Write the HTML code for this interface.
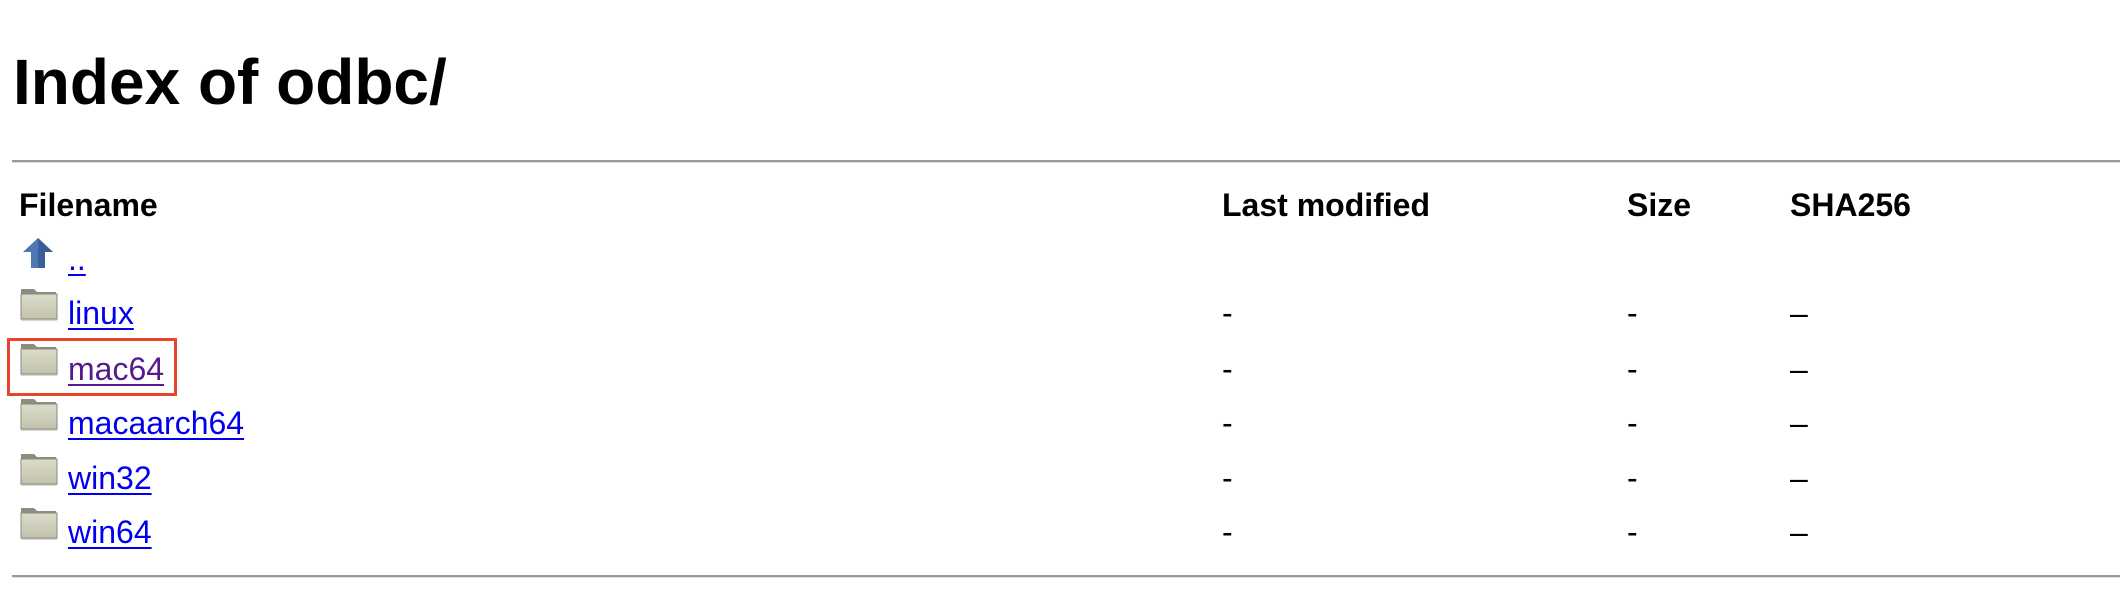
<!DOCTYPE html>
<html><head><meta charset="utf-8"><style>
html,body{margin:0;padding:0;background:#fff;width:2120px;height:614px;overflow:hidden;font-family:"Liberation Sans",Arial,sans-serif;}
.a{position:absolute;white-space:nowrap;}
h1{position:absolute;left:13px;top:50px;margin:0;font-size:64px;line-height:64px;font-weight:bold;}
.hr{position:absolute;left:12px;width:2108px;height:2px;background:#9a9a9a;border-bottom:1px solid #e0e0e0;}
.th{font-size:32px;line-height:32px;font-weight:bold;}
.t{font-size:32px;line-height:32px;}
a{color:#0000ee;text-decoration:underline;text-decoration-thickness:2px;text-underline-offset:4px;}
a.v{color:#551a8b;}
.box{position:absolute;left:7px;top:338px;width:164px;height:52px;border:3px solid #e8452c;}
</style></head><body>
<h1>Index of odbc/</h1>
<div class="hr" style="top:160px"></div>
<div class="a th" style="left:19px;top:189px">Filename</div>
<div class="a th" style="left:1222px;top:189px">Last modified</div>
<div class="a th" style="left:1627px;top:189px">Size</div>
<div class="a th" style="left:1790px;top:189px">SHA256</div>

<svg class="a" style="left:21px;top:237px" width="34" height="32" viewBox="0 0 34 32">
<path d="M17 1 L32 15 L24 15 L24 31 L10 31 L10 15 L2 15 Z" fill="#4f77b3"/>
<path d="M17 1 L32 15 L24 15 L24 31 L17 31 Z" fill="#3a5f97"/>
</svg>
<div class="a t" style="left:68px;top:243px"><a href="#">..</a></div>

<svg width="0" height="0" style="position:absolute"><defs>
<linearGradient id="fg" x1="0" y1="0" x2="0" y2="1"><stop offset="0" stop-color="#dcdccb"/><stop offset="1" stop-color="#c2c2ad"/></linearGradient>
<symbol id="fold" viewBox="0 0 38 34">
<path d="M1 2 h13 l3 3 h19 v5 h-35 z" fill="#8c8c80"/>
<rect x="1" y="7" width="36" height="25" fill="url(#fg)" stroke="#8a8a7c" stroke-width="1"/>
<rect x="1" y="32" width="36" height="1.5" fill="#b0b0a4"/>
</symbol></defs></svg>

<svg class="a" style="left:20px;top:287px" width="38" height="34"><use href="#fold"/></svg>
<div class="a t" style="left:68px;top:297px"><a href="#">linux</a></div>
<svg class="a" style="left:20px;top:342px" width="38" height="34"><use href="#fold"/></svg>
<div class="a t" style="left:68px;top:353px"><a class="v" href="#">mac64</a></div>
<svg class="a" style="left:20px;top:397px" width="38" height="34"><use href="#fold"/></svg>
<div class="a t" style="left:68px;top:407px"><a href="#">macaarch64</a></div>
<svg class="a" style="left:20px;top:452px" width="38" height="34"><use href="#fold"/></svg>
<div class="a t" style="left:68px;top:462px"><a href="#">win32</a></div>
<svg class="a" style="left:20px;top:506px" width="38" height="34"><use href="#fold"/></svg>
<div class="a t" style="left:68px;top:516px"><a href="#">win64</a></div>

<div class="box"></div>

<div class="a t" style="left:1222px;top:297px">-</div><div class="a t" style="left:1627px;top:297px">-</div><div class="a t" style="left:1790px;top:297px">–</div>
<div class="a t" style="left:1222px;top:353px">-</div><div class="a t" style="left:1627px;top:353px">-</div><div class="a t" style="left:1790px;top:353px">–</div>
<div class="a t" style="left:1222px;top:407px">-</div><div class="a t" style="left:1627px;top:407px">-</div><div class="a t" style="left:1790px;top:407px">–</div>
<div class="a t" style="left:1222px;top:462px">-</div><div class="a t" style="left:1627px;top:462px">-</div><div class="a t" style="left:1790px;top:462px">–</div>
<div class="a t" style="left:1222px;top:516px">-</div><div class="a t" style="left:1627px;top:516px">-</div><div class="a t" style="left:1790px;top:516px">–</div>

<div class="hr" style="top:575px"></div>
</body></html>
